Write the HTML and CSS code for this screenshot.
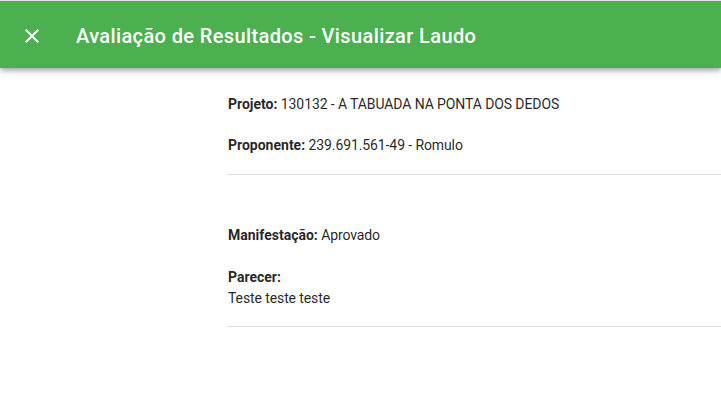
FILE: index.html
```html
<!DOCTYPE html>
<html lang="pt">
<head>
<meta charset="utf-8">
<link rel="stylesheet" href="styles.css">
</head>
<body>
<header class="toolbar">
  <button class="close" aria-label="Fechar">
    <svg width="24" height="24" viewBox="0 0 24 24"><path d="M19 6.41L17.59 5 12 10.59 6.41 5 5 6.41 10.59 12 5 17.59 6.41 19 12 13.41 17.59 19 19 17.59 13.41 12z" fill="#fff"/></svg>
  </button>
  <h1 class="title">Avaliação de Resultados - Visualizar Laudo</h1>
</header>
<main class="content">
  <section class="block first">
    <p class="row"><b>Projeto:</b> 130132 - A TABUADA NA PONTA DOS DEDOS</p>
    <p class="row"><b>Proponente:</b> 239.691.561-49 - Romulo</p>
  </section>
  <hr class="divider">
  <section class="block second">
    <p class="row"><b>Manifestação:</b> Aprovado</p>
    <p class="row tall"><b>Parecer:</b><br>Teste teste teste</p>
  </section>
  <hr class="divider">
</main>
</body>
</html>
```

FILE: styles.css
```css
* { box-sizing: border-box; }
html, body { margin: 0; padding: 0; background: #fff; }
body {
  font-family: Roboto, "Liberation Sans", sans-serif;
  font-size: 14px;
  color: rgba(0,0,0,0.87);
  overflow: hidden;
  border-top: 1px solid #e6e2e4;
}
.toolbar {
  height: 67px;
  background: #4caf50;
  display: flex;
  align-items: center;
  padding: 3px 16px 0 20px;
  box-shadow: 0 2px 4px -1px rgba(0,0,0,.2), 0 4px 5px 0 rgba(0,0,0,.14), 0 1px 10px 0 rgba(0,0,0,.12);
  position: relative;
  z-index: 1;
}
.close {
  width: 24px;
  height: 24px;
  padding: 0;
  border: 0;
  background: none;
  display: flex;
  margin-right: 32px;
}
.title {
  margin: 0;
  font-size: 20px;
  font-weight: 500;
  color: #fff;
  letter-spacing: 0.38px;
}
.content {
  padding-left: 228px;
  letter-spacing: -0.1px;
}
.block { display: flex; flex-direction: column; gap: 21px; }
.block.first { padding-top: 26px; padding-bottom: 19px; }
.block.second { padding-top: 50px; padding-bottom: 17px; gap: 22px; }
.row { margin: 0; line-height: 20px; }
.row.tall { line-height: 21px; }
.row b { font-weight: 700; letter-spacing: 0; }
.divider {
  margin: 0;
  border: 0;
  border-top: 1px solid rgba(0,0,0,0.12);
}
```
